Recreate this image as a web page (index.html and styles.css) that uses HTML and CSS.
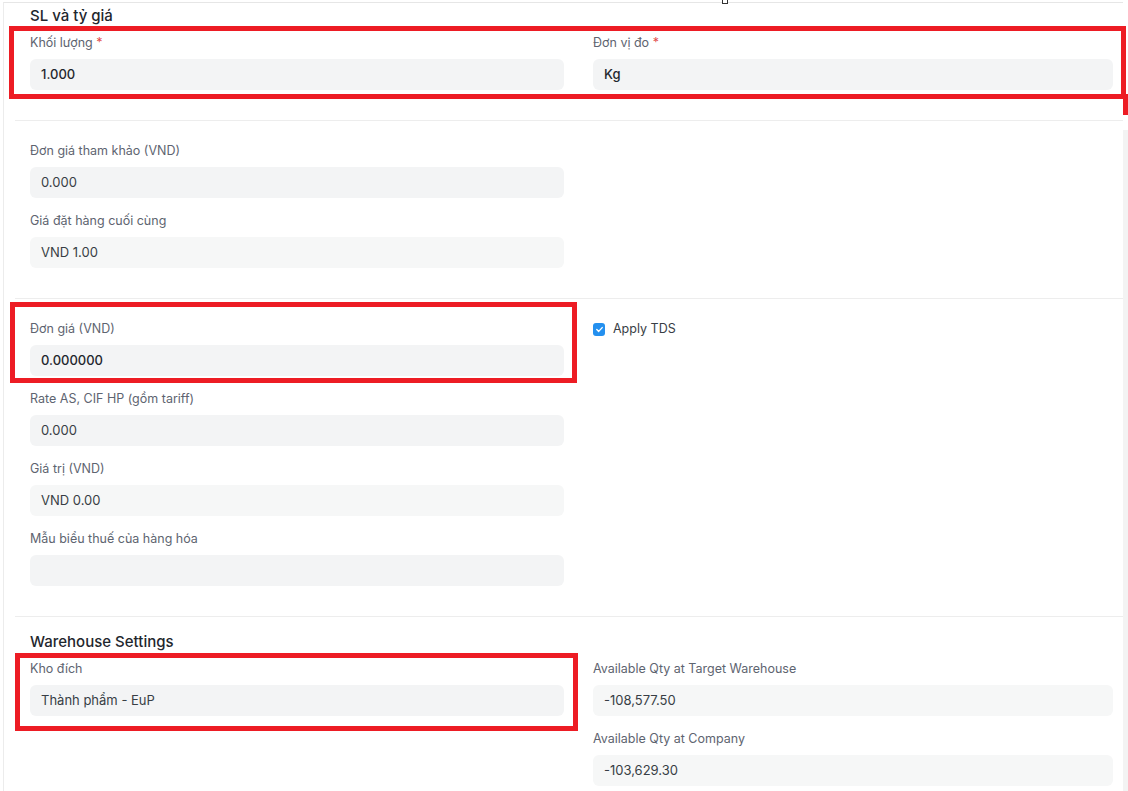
FILE: index.html
```html
<!DOCTYPE html>
<html lang="vi">

<head>
    <meta charset="UTF-8">
    <meta name="viewport" content="width=device-width, initial-scale=1.0">
    <title>SL và tỷ giá</title>

    <link rel="stylesheet" href="styles.css">
</head>

<body>
    <div class="page">
        <section class="section first">
            <h2>SL và tỷ giá</h2>
            <div class="cols">
                <div class="col">
                    <div class="field">
                        <label>Khối lượng <span class="req">*</span></label>
                        <div class="input edit">1.000</div>
                    </div>
                </div>
                <div class="col">
                    <div class="field">
                        <label>Đơn vị đo <span class="req">*</span></label>
                        <div class="input edit">Kg</div>
                    </div>
                </div>
            </div>
        </section>

        <section class="section">
            <div class="cols">
                <div class="col">
                    <div class="field">
                        <label>Đơn giá tham khảo (VND)</label>
                        <div class="input">0.000</div>
                    </div>
                    <div class="field">
                        <label>Giá đặt hàng cuối cùng</label>
                        <div class="input ro">VND 1.00</div>
                    </div>
                </div>
                <div class="col"></div>
            </div>
        </section>

        <section class="section">
            <div class="cols">
                <div class="col">
                    <div class="field">
                        <label>Đơn giá (VND)</label>
                        <div class="input edit">0.000000</div>
                    </div>
                    <div class="field">
                        <label>Rate AS, CIF HP (gồm tariff)</label>
                        <div class="input">0.000</div>
                    </div>
                    <div class="field">
                        <label>Giá trị (VND)</label>
                        <div class="input ro">VND 0.00</div>
                    </div>
                    <div class="field">
                        <label>Mẫu biểu thuế của hàng hóa</label>
                        <div class="input"></div>
                    </div>
                </div>
                <div class="col">
                    <div class="check">
                        <span class="box">
                            <svg width="9" height="9" viewBox="0 0 9 9"><path d="M1.8 4.6 3.7 6.4 7.2 2.6" fill="none" stroke="#fff" stroke-width="1.4" stroke-linecap="round" stroke-linejoin="round"/></svg>
                        </span>
                        <span>Apply TDS</span>
                    </div>
                </div>
            </div>
        </section>

        <section class="section head">
            <h2>Warehouse Settings</h2>
            <div class="cols">
                <div class="col">
                    <div class="field">
                        <label>Kho đích</label>
                        <div class="input">Thành phẩm - EuP</div>
                    </div>
                </div>
                <div class="col">
                    <div class="field">
                        <label>Available Qty at Target Warehouse</label>
                        <div class="input ro">-108,577.50</div>
                    </div>
                    <div class="field">
                        <label>Available Qty at Company</label>
                        <div class="input ro">-103,629.30</div>
                    </div>
                </div>
            </div>
        </section>
    </div>
    <div class="scrollbar"></div>

    <!-- annotation marks drawn over the form -->
    <div class="mark mark-1"></div>
    <div class="mark mark-1-tail"></div>
    <div class="mark mark-2"></div>
    <div class="mark mark-3"></div>
    <div class="cursor"></div>
</body>

</html>
```

FILE: styles.css
```css
* {
    padding: 0;
    margin: 0;
    box-sizing: border-box;
    font-family: Inter, "Noto Sans", sans-serif;
}

body {
    position: relative;
    width: 1128px;
    height: 791px;
    overflow: hidden;
    background-color: white;
    display: flex;
    align-items: flex-start;
    color: #1f272e;
}

.page {
    width: 1120px;
    min-height: 800px;
    margin-left: 3px;
    margin-top: 2px;
    border-left: 1px solid #ececec;
    border-top: 1px solid #e6e6e6;
}

.scrollbar {
    width: 5px;
    height: 700px;
    margin-top: 130px;
    background-color: #f3f3f3;
}

.section {
    margin-left: 11px;
    padding: 21px 0 30px 15px;
    border-bottom: 1px solid #ededed;
}

.section.first {
    padding-top: 3px;
}

.section.head {
    padding-top: 15px;
}

.section h2 {
    font-size: 15px;
    line-height: 20px;
    font-weight: 500;
    color: #1f272e;
    margin-bottom: 8px;
}

.cols {
    display: grid;
    grid-template-columns: 534px 520px;
    gap: 29px;
}

.field {
    margin-bottom: 14px;
}

.field:last-child {
    margin-bottom: 0;
}

.field label {
    display: block;
    font-size: 12.5px;
    line-height: 18px;
    color: #5e6470;
    margin-bottom: 7px;
}

.field .req {
    color: #e24c4c;
}

.input {
    height: 31px;
    border-radius: 6px;
    background-color: #f3f4f5;
    padding: 0 11px;
    font-size: 13px;
    line-height: 31px;
    color: #383e45;
}

.input.edit {
    color: #1f272e;
    font-weight: 500;
}

.input.ro {
    background-color: #f6f7f7;
}

.check {
    display: flex;
    align-items: flex-start;
    gap: 8px;
    font-size: 12.5px;
    line-height: 18px;
    color: #383e45;
}

.check .box {
    width: 12px;
    height: 13px;
    margin-top: 3px;
    border-radius: 3px;
    background-color: #2490ef;
    display: flex;
    align-items: center;
    justify-content: center;
}

.mark {
    position: absolute;
    border: 5px solid #ed1c24;
}

.mark-1 {
    left: 9px;
    top: 26px;
    width: 1117px;
    height: 73px;
}

.mark-1-tail {
    left: 1123px;
    top: 94px;
    width: 5px;
    height: 21px;
    border: none;
    background-color: #ed1c24;
}

.mark-2 {
    left: 10px;
    top: 302px;
    width: 567px;
    height: 81px;
}

.mark-3 {
    left: 15px;
    top: 653px;
    width: 563px;
    height: 78px;
}

.cursor {
    position: absolute;
    left: 722px;
    top: -1px;
    width: 6px;
    height: 5px;
    border: 1px solid #333;
    background-color: white;
}
```
